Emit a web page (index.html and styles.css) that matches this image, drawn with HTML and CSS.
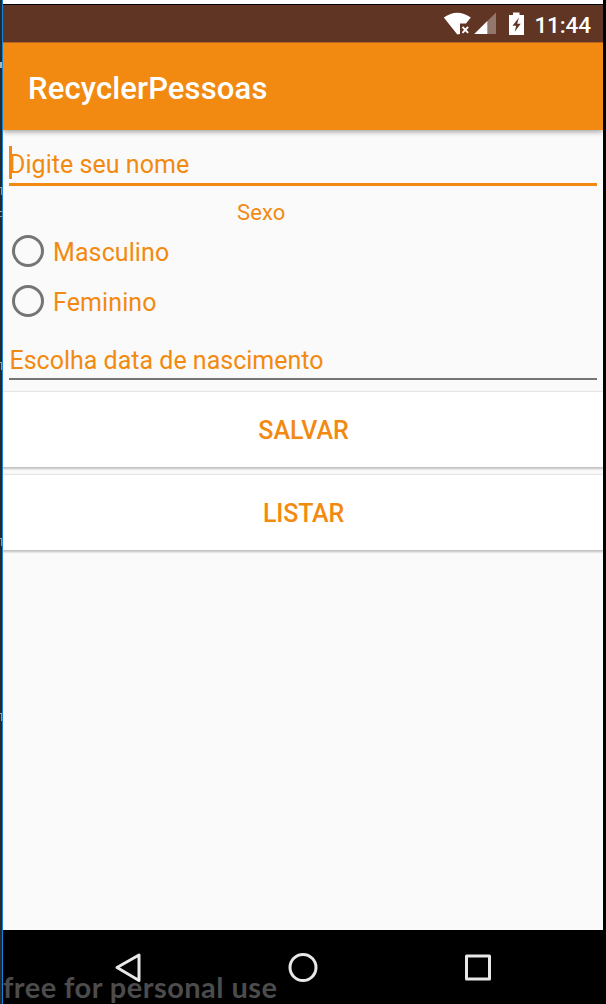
FILE: index.html
```
<!DOCTYPE html>
<html lang="pt-BR">
<head>
<meta charset="utf-8">
<title>RecyclerPessoas</title>
<link rel="stylesheet" href="styles.css">
</head>
<body>
<div class="desktop">
  <div class="edge">
    <i class="mark m1"></i><i class="mark m2"></i><i class="mark m3"></i><i class="mark m4"></i><i class="mark m5"></i><i class="mark m6"></i>
  </div>
  <main class="phone">
    <div class="status">
      <svg class="status-icons" width="86" height="37" viewBox="0 0 86 37">
        <path d="M.8 12.500Q14.300 2.800 27.800 12.500L23 18.500H17V29L14.300 29.500Z" fill="#fff"/>
        <path d="M19.500 21.800l5.600 6M25.100 21.800l-5.600 6" stroke="#fff" stroke-width="1.900"/>
        <path d="M53 7.500V29H31.300Z" fill="#fff" opacity=".33"/>
        <path d="M44.300 16.100V29H31.300Z" fill="#fff"/>
        <path d="M70 7.500h6.500v2.500H81v20H66V10h4Z" fill="#fff"/>
        <path d="M76 12.500l-6.500 8.200h3.700l-1.500 6 6-8h-3.500Z" fill="#603524"/>
      </svg>
      <span class="clock">11:44</span>
    </div>
    <header class="appbar"><h1>RecyclerPessoas</h1></header>
    <section class="content">
      <div class="field name"><span>Digite seu nome</span><i class="caret"></i></div>
      <div class="label">Sexo</div>
      <div class="option"><i class="radio"></i><span>Masculino</span></div>
      <div class="option"><i class="radio"></i><span>Feminino</span></div>
      <div class="field date"><span>Escolha data de nascimento</span></div>
      <div class="button">SALVAR</div>
      <div class="button listar">LISTAR</div>
    </section>
    <nav class="navbar">
      <svg width="600" height="74" viewBox="0 0 600 74" fill="none" stroke="#e8e8e8" stroke-width="3" stroke-linejoin="round">
        <path d="M114 37.500L136 25V50.500Z"/>
        <circle cx="300" cy="37.500" r="13"/>
        <rect x="463.500" y="26" width="23" height="23"/>
      </svg>
      <span class="watermark">free for personal use</span>
    </nav>
  </main>
</div>
</body>
</html>
```
FILE: styles.css
```
* { box-sizing: border-box; }
body { margin: 0; background: #000; font-family: Roboto, sans-serif; }
.desktop { display: flex; width: 606px; height: 1004px; overflow: hidden; }
.edge { position: relative; width: 3px; background: #25282c; border-right: 1px solid #1683d8; overflow: hidden; }
.mark { position: absolute; left: 0; width: 2px; height: 8px; border-top: 1px solid #a8a49a; border-right: 1px solid #8795a5; }
.m1 { top: 62px; height: 6px; border: 1px solid #b5b5a5; }
.m2 { top: 187px; }
.m3 { top: 211px; height: 6px; border-right: 0; border-bottom: 1px solid #8795a5; }
.m4 { top: 362px; }
.m5 { top: 538px; }
.m6 { top: 713px; }
.phone { display: flex; flex-direction: column; width: 600px; height: 1004px; border-top: 4px solid #fff; }
.status { display: flex; justify-content: flex-end; height: 38px; background: #603524; border-top: 1px solid #000; padding-right: 12px; color: #fff; }
.status-icons { display: block; margin-right: 5px; }
.clock { font-size: 22.5px; font-weight: 500; line-height: 40px; letter-spacing: -.1px; white-space: nowrap; }
.appbar { position: relative; display: flex; align-items: center; height: 88px; padding: 4px 0 0 25px; background: #f28a11; border-top: 1px solid #b9651c; box-shadow: 0 2px 5px rgba(0,0,0,.35); clip-path: inset(0 0 -10px 0); }
.appbar h1 { margin: 0; font-size: 31px; font-weight: 500; line-height: 36px; letter-spacing: .15px; color: #fff; white-space: nowrap; }
.content { height: 800px; background: #fafafa; color: #f28a11; overflow: hidden; }
.field { position: relative; margin: 0 6px; font-size: 25px; white-space: nowrap; }
.name { height: 56px; padding-top: 16px; line-height: 37px; letter-spacing: .04px; border-bottom: 3px solid #f28a11; }
.caret { position: absolute; left: 0; top: 16px; width: 3px; height: 33px; background: #f28a11; }
.label { height: 40px; padding: 14px 0 0 234px; font-size: 22px; line-height: 25px; letter-spacing: .1px; }
.option { display: flex; align-items: center; gap: 9px; height: 50px; padding-left: 9px; font-size: 25px; line-height: 30px; letter-spacing: .1px; }
.option span { padding-top: 3px; }
.radio { width: 32px; height: 32px; border: 3px solid #757575; border-radius: 50%; }
.date { height: 54px; padding: 20px 0 0 .5px; line-height: 30px; border-bottom: 2px solid #757575; border-image: linear-gradient(#bcbcbc 50%, #757575 50%) 2; border-image-width: 0 0 2px; margin-bottom: 12px; }
.button { display: flex; align-items: center; justify-content: center; height: 75px; margin-bottom: 8px; padding: 2px 0 0 1px; background: #fff; box-shadow: 0 1px 2px 1px rgba(0,0,0,.23); font-size: 25px; font-weight: 500; }
.listar { letter-spacing: -.15px; }
.navbar { position: relative; height: 74px; background: #000; overflow: hidden; }
.navbar svg { display: block; }
.watermark { position: absolute; left: 0; top: 39px; font: 700 29px/36px Lato, sans-serif; letter-spacing: .46px; color: #4c4c4c; white-space: nowrap; }
```
